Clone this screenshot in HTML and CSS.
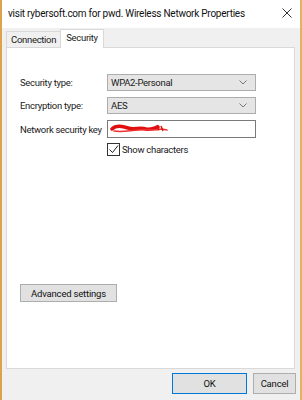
FILE: index.html
```html
<!DOCTYPE html>
<html lang="en">
<head>
  <meta charset="UTF-8">
  <title>Wireless Network Properties</title>
  <link rel="stylesheet" href="styles.css">
</head>
<body>
  <div class="window">
    <div class="titlebar">
      <span class="title">visit rybersoft.com for pwd. Wireless Network Properties</span>
      <svg class="close" width="10" height="10" viewBox="0 0 10 10">
        <path d="M0.5 0.5 L9.5 9.5 M9.5 0.5 L0.5 9.5" stroke="#333" stroke-width="1" fill="none"/>
      </svg>
    </div>

    <div class="tabs">
      <div class="tab">Connection</div>
      <div class="tab active">Security</div>
    </div>

    <div class="panel">
      <div class="form">
        <label>Security type:</label>
        <div class="select">
          <span>WPA2-Personal</span>
          <svg width="8" height="5" viewBox="0 0 8 5"><path d="M0.5 0.5 L4 4 L7.5 0.5" stroke="#777" fill="none"/></svg>
        </div>

        <label>Encryption type:</label>
        <div class="select">
          <span>AES</span>
          <svg width="8" height="5" viewBox="0 0 8 5"><path d="M0.5 0.5 L4 4 L7.5 0.5" stroke="#777" fill="none"/></svg>
        </div>

        <label>Network security key</label>
        <div class="input">
          <!-- redacted key -->
          <svg width="62" height="12" viewBox="0 0 62 12">
            <path d="M2 6 C6 2 12 3 18 5 C24 7 30 4 36 6 C40 7 44 5 48 4" stroke="#e01010" stroke-width="3.5" fill="none" stroke-linecap="round"/>
            <path d="M4 8 C10 9 20 8 28 7 C36 6 44 8 52 6 L57 7" stroke="#f03030" stroke-width="1.5" fill="none" stroke-linecap="round"/>
            <path d="M47 2 L49 7 M51 3 L53 8" stroke="#e01010" stroke-width="1.5" fill="none"/>
          </svg>
        </div>

        <span></span>
        <label class="check">
          <span class="box">
            <svg width="11" height="11" viewBox="0 0 11 11"><path d="M1.5 5.5 L4.5 8.5 L10 1.5" stroke="#222" stroke-width="1" fill="none"/></svg>
          </span>
          Show characters
        </label>
      </div>

      <button class="btn advanced">Advanced settings</button>
    </div>

    <div class="footer">
      <button class="btn ok">OK</button>
      <button class="btn cancel">Cancel</button>
    </div>
  </div>
</body>
</html>
```

FILE: styles.css
```css
* {
  box-sizing: border-box;
  margin: 0;
  padding: 0;
}

body {
  font-family: Roboto, 'Liberation Sans', sans-serif;
  font-size: 9.5px;
  letter-spacing: -0.3px;
  color: #1a1a1a;
  background-color: #fff;
}

.window {
  width: 302px;
  height: 400px;
  background-color: #f0f0f0;
  border-left: 2px solid #dca24c;
  border-right: 2px solid #e3b35e;
  display: flex;
  flex-direction: column;
  overflow: hidden;
}

.titlebar {
  height: 28px;
  background-color: #fff;
  display: flex;
  align-items: center;
  justify-content: space-between;
  padding: 0 8px 2px 6px;
}

.title {
  font-size: 10px;
  letter-spacing: -0.25px;
  color: #111;
}

.tabs {
  height: 19px;
  display: flex;
  align-items: flex-end;
  padding-left: 4px;
}

.tab {
  height: 16px;
  padding: 0 4px;
  border: 1px solid #d9d9d9;
  border-bottom: none;
  background-color: #f0f0f0;
  color: #222;
  line-height: 15px;
}

.tab.active {
  height: 19px;
  padding: 0 5px;
  margin-left: -1px;
  margin-bottom: -1px;
  background-color: #fff;
  position: relative;
  line-height: 15px;
}

.panel {
  height: 322px;
  margin: 0 5px 0 4px;
  background-color: #fff;
  border: 1px solid #d9d9d9;
  padding: 26px 38px 0 13px;
  display: flex;
  flex-direction: column;
}

.form {
  display: grid;
  grid-template-columns: 87px 1fr;
  row-gap: 6px;
  align-items: center;
}

.form label {
  white-space: nowrap;
}

.select {
  height: 17px;
  background-color: #e5e5e5;
  border: 1px solid #adadad;
  display: flex;
  align-items: center;
  justify-content: space-between;
  padding: 0 8px 0 3px;
}

.input {
  height: 18px;
  border: 1px solid #7a7a7a;
  display: flex;
  align-items: center;
  padding-left: 2px;
}

.check {
  display: flex;
  align-items: center;
  gap: 2px;
  margin-top: -1px;
}

.box {
  width: 13px;
  height: 13px;
  border: 1px solid #333;
  display: flex;
  align-items: center;
  justify-content: center;
  background-color: #fff;
}

.btn {
  font-family: inherit;
  font-size: 9.5px;
  letter-spacing: -0.2px;
  height: 19px;
  background-color: #e1e1e1;
  border: 1px solid #adadad;
  color: #111;
}

.advanced {
  width: 97px;
  height: 18px;
  margin-top: 128px;
}

.footer {
  flex: 1;
  display: flex;
  align-items: center;
  gap: 6px;
  padding: 0 0 2px 170px;
}

.footer .btn {
  height: 21px;
}

.footer .ok {
  width: 75px;
  border: 1px solid #0078d7;
}

.footer .cancel {
  width: 43px;
}
```
